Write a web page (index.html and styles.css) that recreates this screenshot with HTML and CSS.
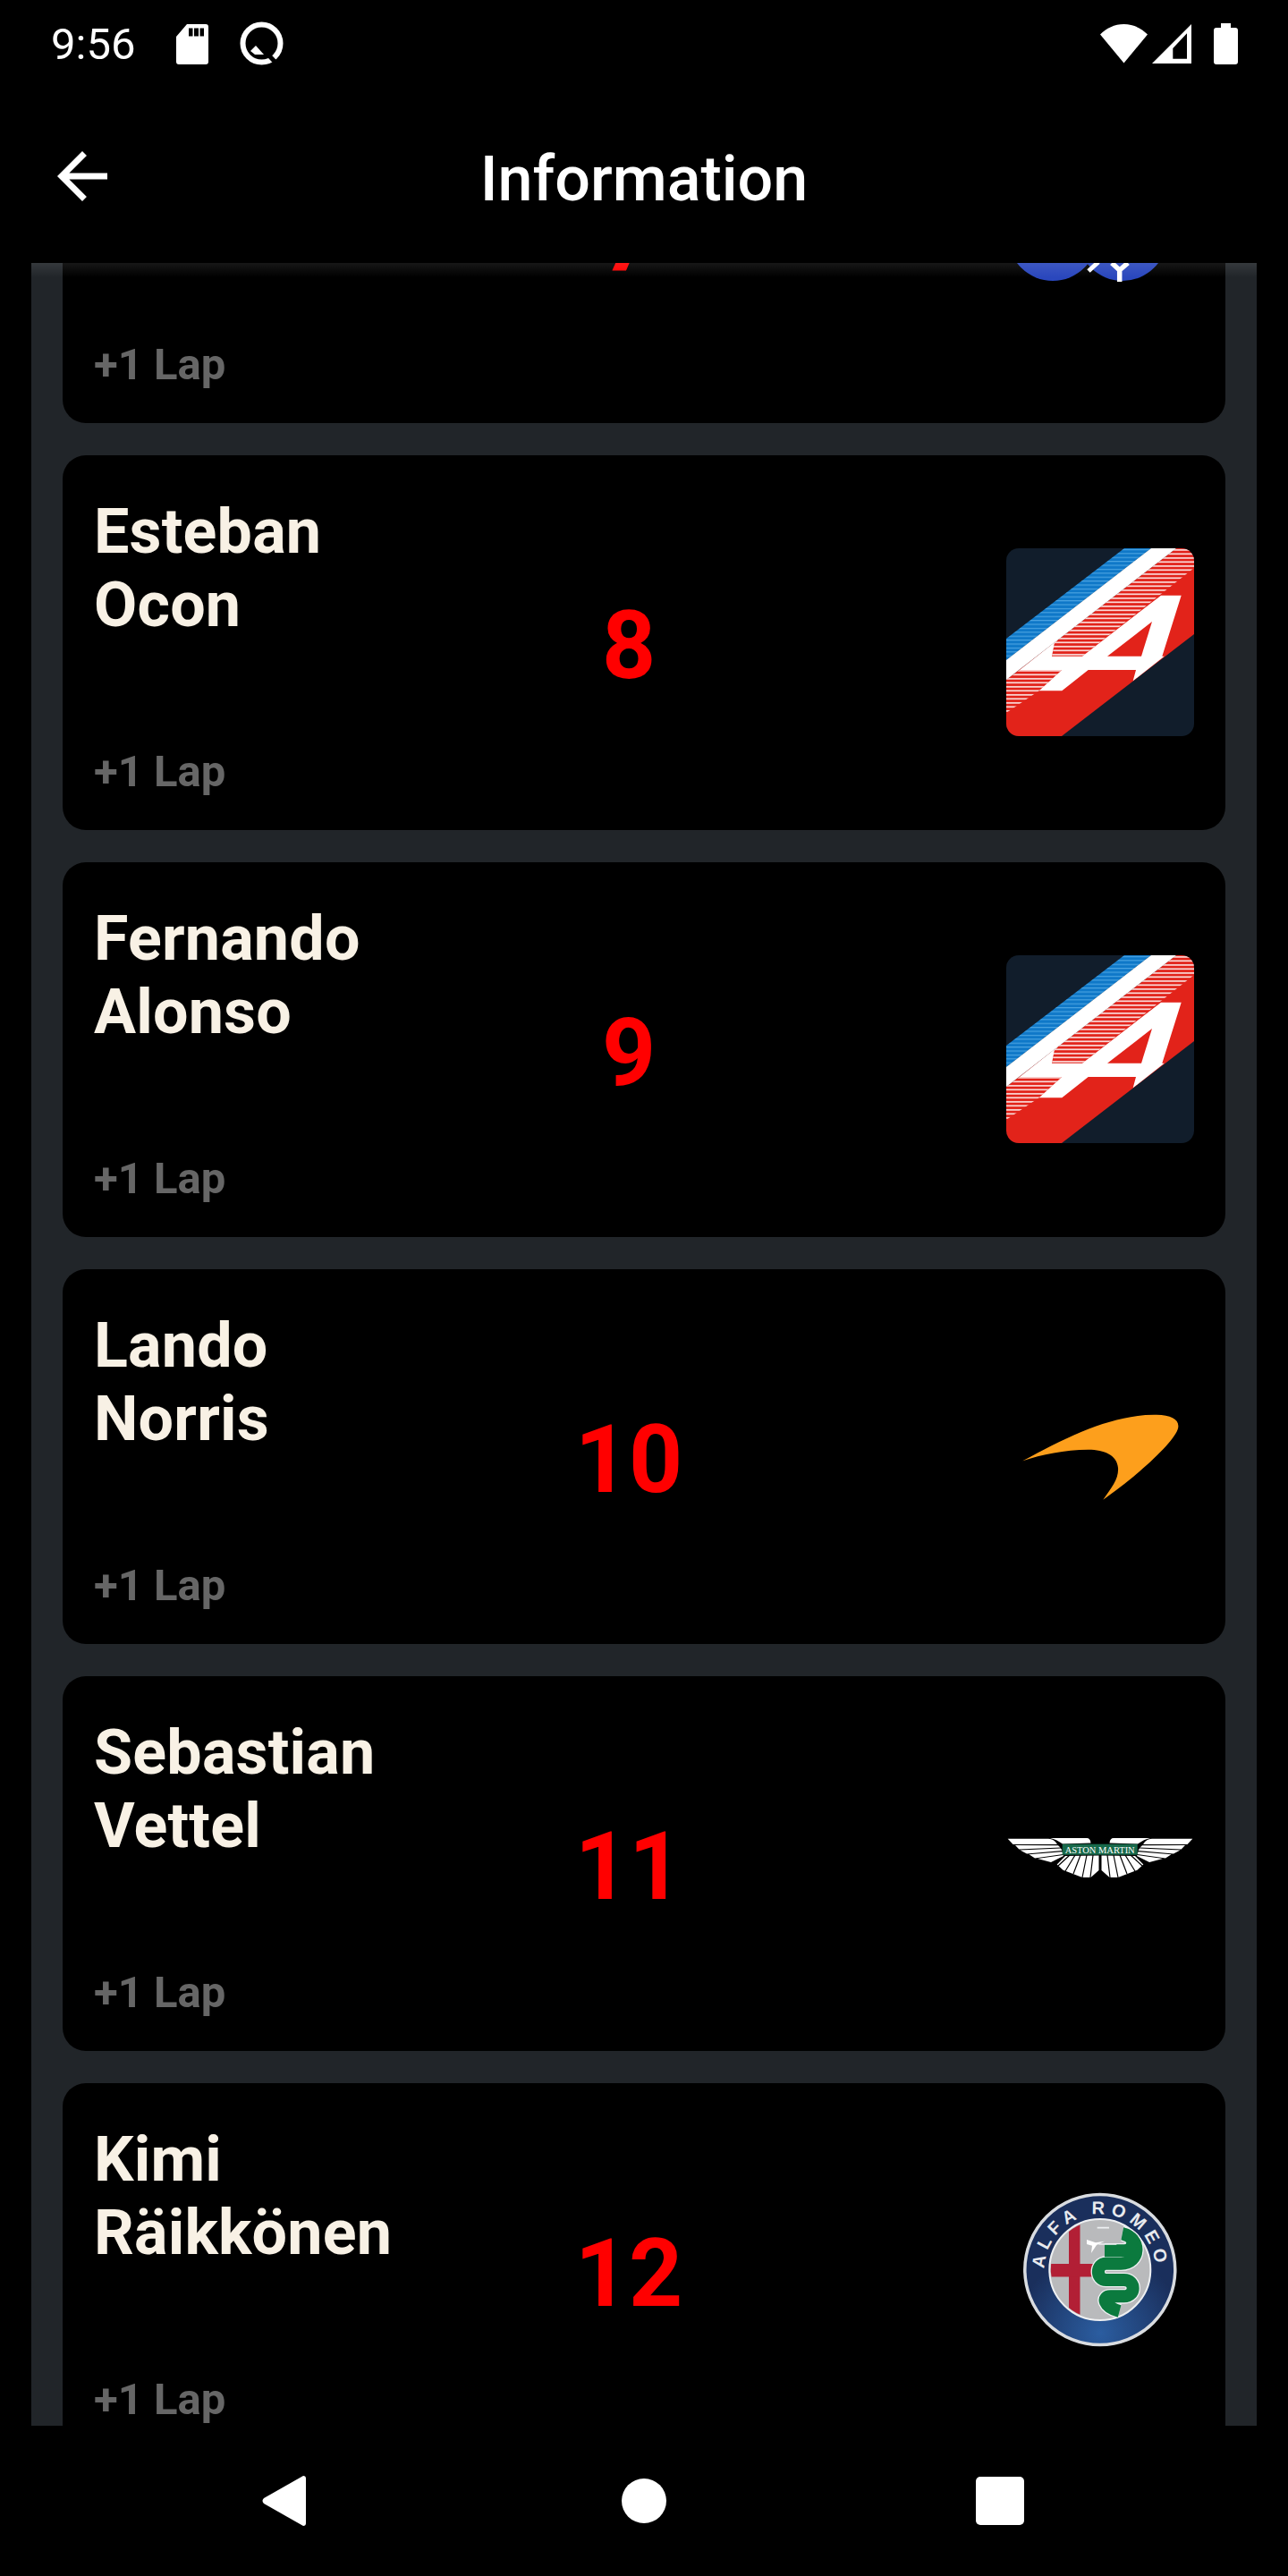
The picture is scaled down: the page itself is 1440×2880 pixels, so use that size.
FILE: index.html
```html
<!DOCTYPE html>
<html lang="en">
<head>
<meta charset="utf-8">
<title>Information</title>
<link rel="stylesheet" href="styles.css">
</head>
<body>
<div class="app">
  <header class="top">
    <div class="status">
      <div class="status-left">
        <span class="time">9:56</span>
        <svg class="ic-sd" viewBox="0 0 36 45"><path fill="#fff" fill-rule="evenodd" d="M12 0H33Q36 0 36 3V42Q36 45 33 45H3Q0 45 0 42V14ZM14 4.500V13.500H18.500V4.500ZM20 4.500V13.500H25V4.500ZM26.500 4.500V13.500H31V4.500Z"/></svg>
        <svg class="ic-q" viewBox="0 0 49 49"><circle cx="24.500" cy="24.500" r="21" fill="none" stroke="#fff" stroke-width="6"/><path fill="#fff" d="M18 27L12 33L17 37H27Z"/><path fill="none" stroke="#000" stroke-width="5" d="M28 33L43 49"/></svg>
      </div>
      <div class="status-right">
        <svg class="ic-wifi" viewBox="0 0 53 44"><path fill="#fff" d="M26.500 43.500L0 11.500C7 4.500 16 0 26.500 0S46 4.500 53 11.500Z"/></svg>
        <svg class="ic-signal" viewBox="0 0 44 44"><path fill="#fff" fill-rule="evenodd" d="M44 0V44H0ZM39 10.300L23.300 27V38.700H39Z"/></svg>
        <svg class="ic-battery" viewBox="0 0 27 46"><path fill="#fff" d="M8 0H19V5H24Q27 5 27 8V43Q27 46 24 46H3Q0 46 0 43V8Q0 5 3 5H8Z"/></svg>
      </div>
    </div>
    <div class="appbar">
      <svg class="ic-back" viewBox="0 0 24 24"><path fill="#fff" d="M20 11H7.830l5.590-5.590L12 4l-8 8 8 8 1.410-1.410L7.830 13H20v-2z"/></svg>
      <h1 class="title">Information</h1>
    </div>
  </header>

  <main class="scroller">
    <div class="list">
      <article class="card">
        <div class="info"><div class="name"></div><div class="gap">+1 Lap</div></div>
        <div class="pos">7</div>
        <svg class="logo" viewBox="0 0 210 210">
          <circle cx="52" cy="106" r="50" fill="#2a47bd"/>
          <circle cx="130" cy="106" r="50" fill="#2a47bd"/>
          <path fill="none" stroke="#fff" stroke-width="5" d="M103 135L92 145"/>
          <path fill="none" stroke="#fff" stroke-width="5.500" d="M126.700 157V144M126.700 144L118 136M126.700 144L136 136"/>
        </svg>
      </article>

      <article class="card">
        <div class="info"><div class="name">Esteban<br>Ocon</div><div class="gap">+1 Lap</div></div>
        <div class="pos">8</div>
        <svg class="logo" viewBox="0 0 210 210">
          <defs>
            <clipPath id="al-clip"><rect width="210" height="210" rx="14"/></clipPath>
            <pattern id="al-white" width="10" height="4.500" patternUnits="userSpaceOnUse"><rect y="1" width="10" height="1.700" fill="#fff" opacity=".85"/></pattern>
            <pattern id="al-blue" width="10" height="4.400" patternUnits="userSpaceOnUse"><rect y="1" width="10" height="1" fill="#6fc0f2" opacity=".7"/></pattern>
          </defs>
          <g clip-path="url(#al-clip)">
            <rect width="210" height="210" fill="#111d2b"/>
            <path fill="#0f78c8" d="M132 0H162L0 125V101Z"/>
            <path fill="url(#al-blue)" d="M132 0H162L0 125V101Z"/>
            <path fill="#e2231a" d="M190 0H210V96L62 210H0V147Z"/>
            <path fill="url(#al-white)" d="M190 0H210V22L85 120.700H51L53.700 106.700L58.300 101.700Z"/>
            <path fill="url(#al-white)" d="M15 136H62.300L36.700 159.300L0 184V147Z"/>
            <path fill="#fff" d="M162 0H190L0 147V125Z"/>
            <path fill="#fff" d="M58.300 101.700L53.700 106.700L51 120.700H85L173 52.700H195.700L174.300 120.700H176.700L141.700 148.300L145 136H91.700L62.300 159.300H36.700L62.300 136H15Z"/>
            <path fill="#e2231a" d="M163 82L151 120.700H113Z"/>
          </g>
        </svg>
      </article>

      <article class="card">
        <div class="info"><div class="name">Fernando<br>Alonso</div><div class="gap">+1 Lap</div></div>
        <div class="pos">9</div>
        <svg class="logo" viewBox="0 0 210 210">
          <g clip-path="url(#al-clip)">
            <rect width="210" height="210" fill="#111d2b"/>
            <path fill="#0f78c8" d="M132 0H162L0 125V101Z"/>
            <path fill="url(#al-blue)" d="M132 0H162L0 125V101Z"/>
            <path fill="#e2231a" d="M190 0H210V96L62 210H0V147Z"/>
            <path fill="url(#al-white)" d="M190 0H210V22L85 120.700H51L53.700 106.700L58.300 101.700Z"/>
            <path fill="url(#al-white)" d="M15 136H62.300L36.700 159.300L0 184V147Z"/>
            <path fill="#fff" d="M162 0H190L0 147V125Z"/>
            <path fill="#fff" d="M58.300 101.700L53.700 106.700L51 120.700H85L173 52.700H195.700L174.300 120.700H176.700L141.700 148.300L145 136H91.700L62.300 159.300H36.700L62.300 136H15Z"/>
            <path fill="#e2231a" d="M163 82L151 120.700H113Z"/>
          </g>
        </svg>
      </article>

      <article class="card">
        <div class="info"><div class="name">Lando<br>Norris</div><div class="gap">+1 Lap</div></div>
        <div class="pos">10</div>
        <svg class="logo" viewBox="0 0 210 210">
          <path fill="#fd9f1c" d="M18.300 110.300C70 82 120 58 168 58.700C186 59 195 65 191.700 75C186 92 140 132 108.300 153.700C118 140 126 130 125 118C124 104 110 97.700 91.700 97.700C65 98 40 103 18.300 110.300Z"/>
        </svg>
      </article>

      <article class="card">
        <div class="info"><div class="name">Sebastian<br>Vettel</div><div class="gap">+1 Lap</div></div>
        <div class="pos">11</div>
        <svg class="logo" viewBox="0 0 210 210">
          <defs>
            <g id="am-wing">
              <path fill="#fff" d="M1.700 77.700H47C53 78 55 81 57 84H7.500Z"/>
              <path fill="#fff" d="M49 77H90Q94 77 94.500 82.500L63 83.500C58 80 54 78 49 77Z"/>
              <path fill="#fff" d="M10 85L58 85.300L60.500 87.500L14.300 89.500Z"/>
              <path fill="#fff" d="M15.500 90.500L61 88.500L62.500 91L23 94.500Z"/>
              <path fill="#fff" d="M25.500 95.300L62.500 92.300L63.500 95L32 99.500Z"/>
              <path fill="#fff" d="M35 100L63.500 96L64 97L50 104Z"/>
              <path fill="#fff" d="M66 97L103.500 96.500V113L94.500 121H85L63.500 112.700L56.700 106.500Z"/>
              <path fill="none" stroke="#000" stroke-width="1.200" d="M71 96L58 108M77 96L66 114M83 96L75 117M90 96L85 121M97 96L94 121"/>
            </g>
          </defs>
          <use href="#am-wing"/>
          <use href="#am-wing" transform="translate(210 0) scale(-1 1)"/>
          <rect x="62.700" y="83.700" width="84" height="12" fill="#17694a"/>
          <text class="am-text" x="104.700" y="93.500" text-anchor="middle" textLength="78" lengthAdjust="spacingAndGlyphs">ASTON MARTIN</text>
        </svg>
      </article>

      <article class="card">
        <div class="info"><div class="name">Kimi<br>Räikkönen</div><div class="gap">+1 Lap</div></div>
        <div class="pos">12</div>
        <svg class="logo" viewBox="0 0 210 210">
          <defs>
            <radialGradient id="ar-ring" cx=".5" cy=".92" r=".55"><stop offset="0" stop-color="#2b5da0"/><stop offset="1" stop-color="#1a2f5c"/></radialGradient>
            <clipPath id="ar-inner"><circle cx="104.800" cy="104.500" r="55"/></clipPath>
            <path id="ar-arc" d="M42.800 104.500A62 62 0 0 1 166.800 104.500"/>
          </defs>
          <circle cx="104.800" cy="104.500" r="84" fill="url(#ar-ring)" stroke="#d9dce0" stroke-width="3.500"/>
          <text class="ar-text"><textPath href="#ar-arc" startOffset="50%" text-anchor="middle">ALFA ROMEO</textPath></text>
          <circle cx="104.800" cy="104.500" r="56.500" fill="#b9babc" stroke="#eef0f2" stroke-width="2"/>
          <g clip-path="url(#ar-inner)">
            <rect x="70" y="48" width="12.500" height="114" fill="#b21f35"/>
            <rect x="48" y="98" width="50" height="14.500" fill="#b21f35"/>
          </g>
          <g transform="translate(-5 -4) scale(.3333)">
            <path fill="none" stroke="#eef0f2" stroke-width="50" d="M345 262H405C450 262 450 212 405 205C470 220 465 305 400 305H350C315 305 315 360 350 360H410C450 360 450 415 410 415H365C335 415 340 450 395 465"/>
            <path fill="none" stroke="#0b7a3e" stroke-width="42" d="M345 262H405C450 262 450 212 405 205C470 220 465 305 400 305H350C315 305 315 360 350 360H410C450 360 450 415 410 415H365C335 415 340 450 395 465"/>
            <path fill="none" stroke="#eef0f2" stroke-width="5" d="M325 240H385M320 185H360"/>
            <path fill="#fff" d="M285 225L315 235L345 230L318 243L300 270L303 245L285 240Z"/>
          </g>
        </svg>
      </article>
    </div>
    <div class="shade"></div>
  </main>

  <nav class="navbar">
    <svg class="nav-back" viewBox="0 0 50 56"><path fill="#fff" d="M47 0Q50 0 50 3V53Q50 56 47 56L3 31Q0 28 3 25Z"/></svg>
    <span class="nav-home"></span>
    <span class="nav-recent"></span>
  </nav>
</div>
</body>
</html>
```

FILE: styles.css
```css
* { box-sizing: border-box; }
html, body { margin: 0; padding: 0; background: #000; }
.app {
  width: 1440px;
  height: 2880px;
  display: flex;
  flex-direction: column;
  background: #000;
  font-family: Roboto, "Liberation Sans", sans-serif;
  overflow: hidden;
}
.top { height: 294px; flex: none; background: #000; position: relative; z-index: 2; }
.status {
  height: 98px;
  display: flex;
  justify-content: space-between;
  padding: 24px 56px 0 57px;
}
.status-left, .status-right { display: flex; align-items: flex-start; }
.time { color: #fff; font-size: 49px; line-height: 50px; width: 92px; margin-right: 48px; margin-top: 1px; }
.ic-sd { width: 36px; height: 45px; margin-top: 3px; margin-right: 35px; }
.ic-q { width: 49px; height: 49px; }
.ic-wifi { width: 53px; height: 44px; margin-top: 3px; margin-right: 5px; }
.ic-signal { width: 44px; height: 44px; margin-top: 3px; margin-right: 25px; }
.ic-battery { width: 27px; height: 46px; margin-top: 2px; }
.appbar {
  height: 196px;
  display: flex;
  align-items: center;
  justify-content: center;
  position: relative;
}
.ic-back { position: absolute; left: 50px; top: 57px; width: 84px; height: 84px; }
.title { margin: 8px 0 0; color: #fff; font-size: 70px; font-weight: 500; line-height: 82px; }

.scroller {
  flex: 1;
  margin: 0 35px;
  background: #212529;
  overflow: hidden;
  position: relative;
}
.list {
  display: flex;
  flex-direction: column;
  gap: 36px;
  margin-top: -240px;
  padding: 0 35px;
}
.card {
  height: 419px;
  flex: none;
  background: #000;
  border-radius: 26px;
  padding: 44px 35px 37px;
  display: grid;
  grid-template-columns: 410px 376px 1fr;
  align-items: center;
}
.info { height: 100%; display: flex; flex-direction: column; justify-content: space-between; }
.name { color: #f8f1e5; font-size: 70px; font-weight: 700; line-height: 82px; letter-spacing: .2px; }
.gap { color: #666; font-size: 49px; font-weight: 700; line-height: 57px; }
.pos { color: #f00; font-size: 105px; font-weight: 700; line-height: 123px; text-align: center; }
.logo { width: 210px; height: 210px; justify-self: end; margin-top: -8px; }
.am-text { fill: #fff; font-family: "Liberation Serif", serif; font-size: 10px; }
.ar-text { fill: #e8eaee; font-family: "Liberation Sans", sans-serif; font-size: 20px; font-weight: 700; letter-spacing: 6px; }
.shade {
  position: absolute;
  left: -35px;
  right: -35px;
  top: 0;
  height: 16px;
  background: linear-gradient(to bottom, rgba(255,255,255,.09), rgba(255,255,255,0));
}
.navbar { height: 168px; flex: none; background: #000; position: relative; }
.nav-back { position: absolute; left: 292px; top: 56px; width: 50px; height: 56px; }
.nav-home { position: absolute; left: 695px; top: 59px; width: 50px; height: 50px; border-radius: 50%; background: #fff; }
.nav-recent { position: absolute; left: 1091px; top: 57px; width: 54px; height: 54px; border-radius: 5px; background: #fff; }
```
